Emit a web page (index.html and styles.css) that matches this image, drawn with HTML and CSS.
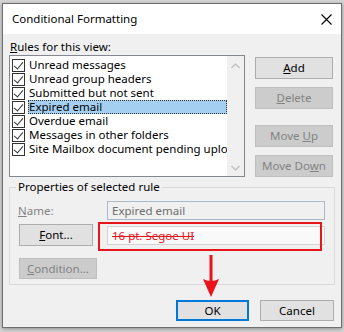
FILE: index.html
```html
<!DOCTYPE html>
<html lang="en">
<head>
    <meta charset="UTF-8">
    <meta name="viewport" content="width=device-width, initial-scale=1.0">
    <title>Conditional Formatting</title>
    <link rel="stylesheet" href="styles.css">
</head>
<body>
    <div class="dialog">
        <div class="titlebar">
            <span class="title">Conditional Formatting</span>
            <svg class="close" width="11" height="11" viewBox="0 0 11 11">
                <path d="M0.5 0.5 L10.5 10.5 M10.5 0.5 L0.5 10.5" stroke="#000" stroke-width="1.1" fill="none"/>
            </svg>
        </div>

        <div class="content">
            <div class="rules-label"><u>R</u>ules for this view:</div>

            <div class="rules-row">
                <div class="rule-list">
                    <ul class="rules">
                        <li><span class="check"></span><span class="rule-name">Unread messages</span></li>
                        <li><span class="check"></span><span class="rule-name">Unread group headers</span></li>
                        <li><span class="check"></span><span class="rule-name">Submitted but not sent</span></li>
                        <li><span class="check"></span><span class="rule-name selected">Expired email</span></li>
                        <li><span class="check"></span><span class="rule-name">Overdue email</span></li>
                        <li><span class="check"></span><span class="rule-name">Messages in other folders</span></li>
                        <li><span class="check"></span><span class="rule-name">Site Mailbox document pending upload</span></li>
                    </ul>
                    <div class="scrollbar">
                        <svg width="17" height="17" viewBox="0 0 17 17">
                            <path d="M4.5 10 L8.5 6 L12.5 10" stroke="#c2c2c2" stroke-width="1.4" fill="none"/>
                        </svg>
                        <svg width="17" height="17" viewBox="0 0 17 17">
                            <path d="M4.5 7 L8.5 11 L12.5 7" stroke="#c2c2c2" stroke-width="1.4" fill="none"/>
                        </svg>
                    </div>
                </div>

                <div class="side-buttons">
                    <button class="btn"><u>A</u>dd</button>
                    <button class="btn disabled"><u>D</u>elete</button>
                    <button class="btn disabled spaced">Move <u>U</u>p</button>
                    <button class="btn disabled">Move Do<u>w</u>n</button>
                </div>
            </div>

            <fieldset class="props">
                <legend>Properties of selected rule</legend>
                <div class="prop-row name-row">
                    <span class="prop-label"><u>N</u>ame:</span>
                    <div class="field name-field">Expired email</div>
                </div>
                <div class="prop-row font-row">
                    <button class="btn font-btn"><u>F</u>ont...</button>
                    <div class="field font-field"><s>16 pt. Segoe UI</s></div>
                    <div class="highlight"></div>
                </div>
                <button class="btn disabled cond-btn"><u>C</u>ondition...</button>
            </fieldset>

            <div class="footer">
                <button class="btn default">OK</button>
                <button class="btn">Cancel</button>
            </div>
        </div>

        <svg class="arrow" width="16" height="42" viewBox="0 0 16 42">
            <rect x="6.5" y="0" width="3" height="28" fill="#e8141a"/>
            <path d="M0 24 Q8 28 16 24 L8 42 Z" fill="#e8141a"/>
        </svg>
    </div>
</body>
</html>
```

FILE: styles.css
```css
:root {
    --dialog-bg: #f0f0f0;
    --btn-bg: #e1e1e1;
    --btn-border: #adadad;
    --btn-disabled-bg: #cccccc;
    --btn-disabled-border: #bfbfbf;
    --text-disabled: #838383;
    --accent: #0078d7;
    --mark-red: #e8141a;
}

* {
    margin: 0;
    padding: 0;
    box-sizing: border-box;
}

body {
    font-family: 'Noto Sans', 'Liberation Sans', sans-serif;
    font-size: 11.5px;
    color: #000;
    background-color: #d6d6d6;
    width: 344px;
    height: 332px;
    overflow: hidden;
}

.dialog {
    position: relative;
    width: 340px;
    height: 325px;
    margin: 3px 0 0 2px;
    background-color: var(--dialog-bg);
    border: 1px solid #6f6f6f;
    box-shadow: 0 1px 4px rgba(0, 0, 0, 0.35);
}

/* title bar */
.titlebar {
    height: 30px;
    display: flex;
    align-items: center;
    justify-content: space-between;
    padding: 0 9px 0 9px;
    background-color: #ffffff;
}

.title {
    font-size: 11.5px;
    line-height: 16px;
}

.close {
    display: block;
    margin-top: 1px;
}

.content {
    padding-left: 6px;
}

.rules-label {
    line-height: 16px;
    margin-top: 5px;
    padding-left: 1px;
}

/* rules list + side buttons */
.rules-row {
    display: flex;
    gap: 10px;
}

.rule-list {
    width: 236px;
    height: 122px;
    display: flex;
    background-color: #ffffff;
    border: 1px solid #828790;
}

.rules {
    list-style: none;
    flex: 1;
    min-width: 0;
    overflow: hidden;
    padding: 2px 0 0 2px;
}

.rules li {
    display: flex;
    align-items: center;
    height: 14px;
    white-space: nowrap;
}

.check {
    position: relative;
    flex: none;
    width: 13px;
    height: 13px;
    margin-right: 3px;
    background-color: #ffffff;
    border: 1px solid #333333;
}

.check::after {
    content: "";
    position: absolute;
    left: 3px;
    top: 0px;
    width: 4px;
    height: 8px;
    border: solid #333333;
    border-width: 0 1px 1px 0;
    transform: rotate(40deg);
}

.rule-name {
    flex: 1;
    line-height: 14px;
    padding-left: 1px;
    overflow: hidden;
}

.rule-name.selected {
    background-color: #a5cff1;
    border: 1px dotted #333333;
    line-height: 12px;
    padding-left: 0;
}

.scrollbar {
    flex: none;
    width: 17px;
    display: flex;
    flex-direction: column;
    justify-content: space-between;
    background-color: #f0f0f0;
    padding-top: 2px;
}

.scrollbar svg {
    display: block;
}

.side-buttons {
    width: 78px;
    margin-top: 2px;
    display: flex;
    flex-direction: column;
    gap: 8px;
}

.btn {
    font-family: inherit;
    font-size: 11.5px;
    line-height: 16px;
    color: #000;
    height: 22px;
    background-color: var(--btn-bg);
    border: 1px solid var(--btn-border);
}

.btn.disabled {
    color: var(--text-disabled);
    background-color: var(--btn-disabled-bg);
    border-color: var(--btn-disabled-border);
}

.btn.spaced {
    margin-top: 8px;
}

/* properties group */
.props {
    width: 326px;
    margin-top: 2px;
    padding: 0 0 5px 6px;
    border: 1px solid #d9d9d9;
}

.props legend {
    line-height: 16px;
    padding: 0 2px;
}

.prop-row {
    position: relative;
    display: flex;
    align-items: center;
}

.name-row {
    margin-top: 6px;
}

.font-row {
    margin-top: 4px;
}

.prop-label {
    width: 91px;
    padding-left: 2px;
    color: var(--text-disabled);
}

.field {
    width: 218px;
    height: 19px;
    line-height: 17px;
    padding-left: 4px;
    white-space: nowrap;
}

.name-field {
    color: #6d6d6d;
    border: 1px solid #a9bacb;
}

.font-field {
    color: var(--mark-red);
    background-color: #f9f9f9;
    border: 1px solid #d4d4d4;
}

.font-field s {
    text-decoration-thickness: 1px;
}

.font-btn {
    width: 74px;
    margin: 0 14px 0 3px;
}

.highlight {
    position: absolute;
    left: 82px;
    top: -2px;
    width: 224px;
    height: 29px;
    border: 2px solid var(--mark-red);
}

.cond-btn {
    display: block;
    width: 78px;
    height: 21px;
    margin: 12px 0 0 3px;
}

/* footer */
.footer {
    display: flex;
    justify-content: flex-end;
    gap: 11px;
    margin-top: 15px;
    padding-right: 7px;
}

.footer .btn {
    width: 74px;
    height: 21px;
}

.footer .btn.default {
    width: 73px;
    border: 2px solid var(--accent);
}

.arrow {
    position: absolute;
    left: 200px;
    top: 251px;
}
```
